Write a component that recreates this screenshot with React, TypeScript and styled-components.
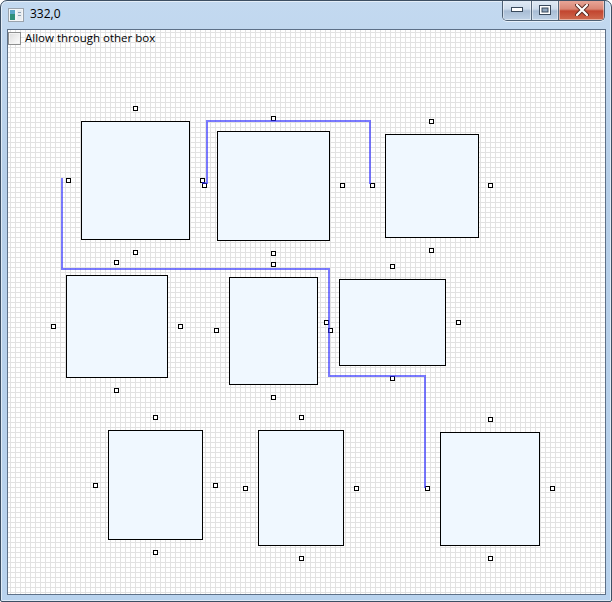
import React from "react";
import styled, { createGlobalStyle } from "styled-components";

const GlobalStyle = createGlobalStyle`
  html, body { margin: 0; padding: 0; }
  body { width: 612px; height: 602px; overflow: hidden; background: #ffffff; font-family: "Open Sans", "Noto Sans", sans-serif; }
`;

const Window = styled.div`
  box-sizing: border-box;
  width: 612px;
  height: 602px;
  border: 1px solid #3d4f63;
  border-radius: 7px 7px 2px 2px;
  background: linear-gradient(180deg, #c3d9f0 0%, #b6cfe9 30%, #b9d3ee 100%);
  display: flex;
  flex-direction: column;
  overflow: hidden;
  box-shadow: inset 0 0 0 1px rgba(255, 255, 255, 0.55);
`;

const TitleBar = styled.div`
  height: 28px;
  display: flex;
  align-items: flex-start;
  flex-shrink: 0;
`;

const AppIcon = styled.svg`
  margin: 6px 0 0 7px;
  flex-shrink: 0;
`;

const Title = styled.span`
  margin: 5px 0 0 6px;
  font-size: 12px;
  line-height: 16px;
  color: #000000;
`;

const Caption = styled.div`
  margin-left: auto;
  margin-right: 6px;
  margin-top: -1px;
  display: flex;
  height: 20px;
  border: 1px solid #4e6074;
  border-top: none;
  border-radius: 0 0 5px 5px;
  overflow: hidden;
  box-shadow: 0 1px 0 rgba(255, 255, 255, 0.6);
`;

const CapButton = styled.div<{ $w: number; $close?: boolean }>`
  width: ${(p) => p.$w}px;
  height: 100%;
  display: flex;
  align-items: center;
  justify-content: center;
  box-sizing: border-box;
  border-left: ${(p) => (p.$w === 28 ? "none" : "1px solid #56687c")};
  background: ${(p) =>
    p.$close
      ? "linear-gradient(180deg, #e9a99c 0%, #d98674 45%, #c2452f 55%, #cf6a4f 100%)"
      : "linear-gradient(180deg, #e3ecf6 0%, #cddcec 45%, #a9bdd5 55%, #bfd2e6 100%)"};
  box-shadow: inset 0 0 0 1px rgba(255, 255, 255, 0.45);
`;

const Client = styled.div`
  margin: 0 5px 6px 6px;
  border: 1px solid #5d7088;
  flex: 1;
  display: flex;
`;

const Canvas = styled.div`
  position: relative;
  flex: 1;
  background-color: #ffffff;
  background-image: linear-gradient(to right, #e2e2e2 1px, transparent 1px),
    linear-gradient(to bottom, #e2e2e2 1px, transparent 1px);
  background-size: 5px 5px;
  background-position: 2px 2px;
  overflow: hidden;
`;

const CheckRow = styled.label`
  position: absolute;
  left: 0;
  top: 1px;
  display: flex;
  align-items: center;
  font-size: 11.5px;
  line-height: 14px;
  color: #000000;
  z-index: 3;
`;

const CheckBox = styled.span`
  box-sizing: border-box;
  width: 13px;
  height: 13px;
  border: 1px solid #8e8f8f;
  background: linear-gradient(135deg, #dcdcdc 0%, #f4f4f4 70%, #ffffff 100%);
  box-shadow: inset 0 0 0 1px #f4f4f4;
  margin-right: 4px;
`;

const Node = styled.div`
  position: absolute;
  box-sizing: border-box;
  border: 1px solid #000000;
  background: #f0f8ff;
`;

const Port = styled.div`
  position: absolute;
  box-sizing: border-box;
  width: 5px;
  height: 5px;
  border: 1px solid #000000;
  background: #ffffff;
  z-index: 1;
`;

const Wires = styled.svg`
  position: absolute;
  left: 0;
  top: 0;
  z-index: 2;
  pointer-events: none;
`;

type Box = { x: number; y: number; w: number; h: number };

const OX = 8;
const OY = 30;

const boxes: Box[] = [
  { x: 81, y: 121, w: 109, h: 119 },
  { x: 217, y: 131, w: 113, h: 110 },
  { x: 385, y: 134, w: 94, h: 104 },
  { x: 66, y: 275, w: 102, h: 103 },
  { x: 229, y: 277, w: 89, h: 108 },
  { x: 339, y: 279, w: 107, h: 87 },
  { x: 108, y: 430, w: 95, h: 110 },
  { x: 258, y: 430, w: 86, h: 116 },
  { x: 440, y: 432, w: 100, h: 114 },
];

const ports: [number, number][] = [
  [135, 108], [68, 180], [202, 180], [135, 252],
  [273, 118], [204, 185], [342, 185], [273, 253],
  [431, 121], [372, 185], [490, 185], [431, 250],
  [116, 262], [53, 326], [180, 326], [116, 390],
  [273, 264], [216, 330], [330, 330], [273, 397],
  [392, 266], [326, 322], [458, 322], [392, 378],
  [155, 417], [95, 485], [215, 485], [155, 552],
  [301, 417], [245, 488], [356, 488], [301, 558],
  [490, 419], [427, 488], [552, 488], [490, 558],
];

const wires = [
  "M54 148 V239 H321 V346 H417 V458",
  "M194 153 H199 V91 H362 V154",
];

export default function App() {
  return (
    <>
      <GlobalStyle />
      <Window>
        <TitleBar>
          <AppIcon width="16" height="16" viewBox="0 0 16 16">
            <rect x="0.5" y="1.5" width="15" height="13" fill="#f4f6f8" stroke="#9aa3ad" />
            <rect x="2" y="3" width="5" height="10" fill="#2f8f7a" />
            <rect x="2" y="3" width="5" height="4" fill="#5aa6c8" />
            <rect x="9" y="3" width="5" height="10" fill="#e9edf1" />
            <rect x="10" y="5" width="3" height="1" fill="#8da2b5" />
            <rect x="10" y="8" width="3" height="1" fill="#8da2b5" />
          </AppIcon>
          <Title>332,0</Title>
          <Caption>
            <CapButton $w={28}>
              <svg width="12" height="6" viewBox="0 0 12 6">
                <rect x="0.5" y="0.5" width="11" height="4" fill="#ffffff" stroke="#3a4a5c" />
              </svg>
            </CapButton>
            <CapButton $w={27}>
              <svg width="12" height="10" viewBox="0 0 12 10">
                <rect x="0.5" y="0.5" width="11" height="9" fill="#ffffff" stroke="#3a4a5c" />
                <rect x="3" y="3" width="6" height="4" fill="#8ea4bc" stroke="#3a4a5c" strokeWidth="1" />
              </svg>
            </CapButton>
            <CapButton $w={46} $close>
              <svg width="14" height="12" viewBox="0 0 14 12">
                <path d="M2 1 L12 11 M12 1 L2 11" stroke="#5a2a22" strokeWidth="4" strokeLinecap="round" />
                <path d="M2 1 L12 11 M12 1 L2 11" stroke="#ffffff" strokeWidth="2.2" strokeLinecap="round" />
              </svg>
            </CapButton>
          </Caption>
        </TitleBar>
        <Client>
          <Canvas>
            <CheckRow>
              <CheckBox />
              Allow through other box
            </CheckRow>
            {boxes.map((b, i) => (
              <Node
                key={i}
                style={{ left: b.x - OX, top: b.y - OY, width: b.w, height: b.h }}
              />
            ))}
            {ports.map(([x, y], i) => (
              <Port key={i} style={{ left: x - 2 - OX, top: y - 2 - OY }} />
            ))}
            <Wires width="597" height="564" viewBox="0 0 597 564">
              {wires.map((d, i) => (
                <path key={i} d={d} fill="none" stroke="rgba(40,40,255,0.62)" strokeWidth="2" />
              ))}
            </Wires>
          </Canvas>
        </Client>
      </Window>
    </>
  );
}
